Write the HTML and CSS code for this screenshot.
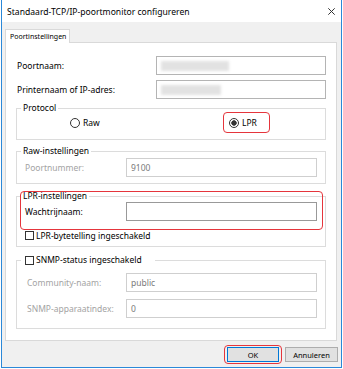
FILE: index.html
```html
<!DOCTYPE html>
<html lang="nl">
<head>
  <meta charset="UTF-8">
  <meta name="viewport" content="width=device-width, initial-scale=1">
  <title>Standaard-TCP/IP-poortmonitor configureren</title>
  <link rel="stylesheet" href="styles.css">
</head>
<body>
  <div class="window">
    <div class="titlebar">
      <span class="title">Standaard-TCP/IP-poortmonitor configureren</span>
      <svg class="close" width="7" height="7" viewBox="0 0 7 7"><path d="M0.3 0.3L6.7 6.7M6.7 0.3L0.3 6.7" stroke="#333" stroke-width="1"/></svg>
    </div>
    <div class="client">
      <div class="tabs"><span class="tab">Poortinstellingen</span></div>
      <div class="panel">
        <div class="row">
          <label>Poortnaam:</label>
          <div class="field wide"><span class="blur"></span></div>
        </div>
        <div class="row second">
          <label>Printernaam of IP-adres:</label>
          <div class="field wide"><span class="blur short"></span></div>
        </div>

        <fieldset class="group protocol">
          <legend>Protocol</legend>
          <div class="radios">
            <label class="choice"><input type="radio" name="proto">Raw</label>
            <label class="choice marked"><input type="radio" name="proto" checked>LPR</label>
          </div>
        </fieldset>

        <fieldset class="group raw">
          <legend>Raw-instellingen</legend>
          <div class="row inner">
            <label class="off">Poortnummer:</label>
            <div class="field narrow off">9100</div>
          </div>
        </fieldset>

        <fieldset class="group lpr">
          <span class="mark"></span>
          <legend>LPR-instellingen</legend>
          <div class="row inner">
            <label>Wachtrijnaam:</label>
            <div class="field narrow dark"></div>
          </div>
          <label class="check"><input type="checkbox">LPR-bytetelling ingeschakeld</label>
        </fieldset>

        <fieldset class="group snmp">
          <legend><label class="check"><input type="checkbox">SNMP-status ingeschakeld</label></legend>
          <div class="row inner deep">
            <label class="off">Community-naam:</label>
            <div class="field narrow off">public</div>
          </div>
          <div class="row inner deep next">
            <label class="off">SNMP-apparaatindex:</label>
            <div class="field narrow off">0</div>
          </div>
        </fieldset>
      </div>
      <div class="buttons">
        <span class="marked-btn"><button class="btn default">OK</button></span>
        <button class="btn">Annuleren</button>
      </div>
    </div>
  </div>
</body>
</html>
```

FILE: styles.css
```css
/* Reset */
* { margin: 0; padding: 0; box-sizing: border-box; }
body {
  background: #fff;
  font-family: 'Segoe UI', 'Noto Sans', sans-serif;
  font-size: 8.5px;
  color: #000;
}
.window {
  margin-left: 1px;
  width: 341px;
  height: 368px;
  border: 1px solid #2b88d8;
  border-top: 0;
  background: #f0f0f0;
  display: flex;
  flex-direction: column;
}
.titlebar {
  height: 22px;
  background: #fff;
  display: flex;
  align-items: center;
  justify-content: space-between;
  padding: 1px 6px 0 5px;
}
.title {
  font-size: 8.6px;
  color: #000;
}
.client {
  flex: 1;
  display: flex;
  flex-direction: column;
  padding: 7px 4px 0 3px;
}
.tabs {
  display: flex;
  height: 13px;
}
.tab {
  position: relative;
  z-index: 1;
  height: 14px;
  padding: 0 3px 0 4px;
  font-size: 7px;
  line-height: 13px;
  background: #fff;
  border: 1px solid #d9d9d9;
  border-bottom: 0;
}
.panel {
  height: 299px;
  background: #fff;
  border: 1px solid #d9d9d9;
  padding: 13px 10px 0 10px;
}
.row {
  display: flex;
  align-items: center;
  justify-content: space-between;
  height: 19px;
  padding-left: 1px;
}
.row.second { margin-top: 5px; }
.row.inner { padding-left: 4px; }
.row.deep { padding-left: 6px; margin-top: 7px; }
.field {
  height: 19px;
  border: 1px solid #b4b4b4;
  background: #fff;
  padding: 0 4px;
  line-height: 17px;
  display: flex;
  align-items: center;
}
.field.wide { width: 170px; }
.field.narrow { width: 191px; }
.field.dark { border-color: #999; }
.field.off {
  border-color: #cfcfcf;
  color: #7a7a7a;
}
label.off { color: #a3a3a3; }
.blur {
  display: block;
  width: 68px;
  height: 10px;
  background: #e2e2e2;
  filter: blur(1.5px);
}
.blur.short { width: 60px; }

/* Group boxes */
.group {
  border: 1px solid #dcdcdc;
  padding: 0 8px 6px 4px;
  min-width: 0;
}
.group legend {
  padding: 0 2px;
  line-height: 12px;
}
.protocol { margin-top: 3px; padding-bottom: 6px; }
.raw { margin-top: 5px; }
.raw .row { margin-top: 1px; }
.lpr {
  position: relative;
  margin-top: 6px;
  padding-bottom: 5px;
}
.snmp { margin-top: 7px; padding-bottom: 10px; }
.snmp legend { padding: 0 13px 0 4px; }

.radios {
  display: grid;
  grid-template-columns: 153px auto;
  align-items: center;
  height: 21px;
  margin-top: -2px;
  padding-left: 49px;
}
.choice, .check {
  display: flex;
  align-items: center;
  gap: 3px;
}
.choice input {
  appearance: none;
  width: 10px;
  height: 10px;
  border: 1px solid #333;
  border-radius: 50%;
  background: #fff;
}
.choice input:checked {
  background: radial-gradient(circle, #333 0 2.4px, #fff 3px);
}
.marked {
  justify-self: start;
  height: 21px;
  border: 1.5px solid #e5353c;
  border-radius: 4px;
  padding: 0 12px 0 5px;
}
.check {
  height: 12px;
  gap: 2px;
}
.lpr > .check { margin-top: 8px; padding-left: 4px; }
.check input {
  appearance: none;
  width: 9px;
  height: 9px;
  border: 1px solid #333;
  background: #fff;
}
.mark {
  position: absolute;
  left: 3px;
  top: -11px;
  width: 303px;
  height: 39px;
  border: 1.5px solid #e5353c;
  border-radius: 4px;
}

/* Buttons */
.buttons {
  flex: 1;
  display: flex;
  justify-content: flex-end;
  align-items: center;
  gap: 3px;
  margin-right: -1px;
  padding-top: 1px;
}
.marked-btn {
  display: flex;
  border: 1.5px solid #e5353c;
  border-radius: 4px;
  padding: 1px 2px;
}
.btn {
  height: 15px;
  width: 53px;
  font-family: inherit;
  font-size: 7.5px;
  color: #000;
  background: #e1e1e1;
  border: 1px solid #adadad;
}
.btn.default {
  width: 52px;
  border-color: #0078d7;
}
```
